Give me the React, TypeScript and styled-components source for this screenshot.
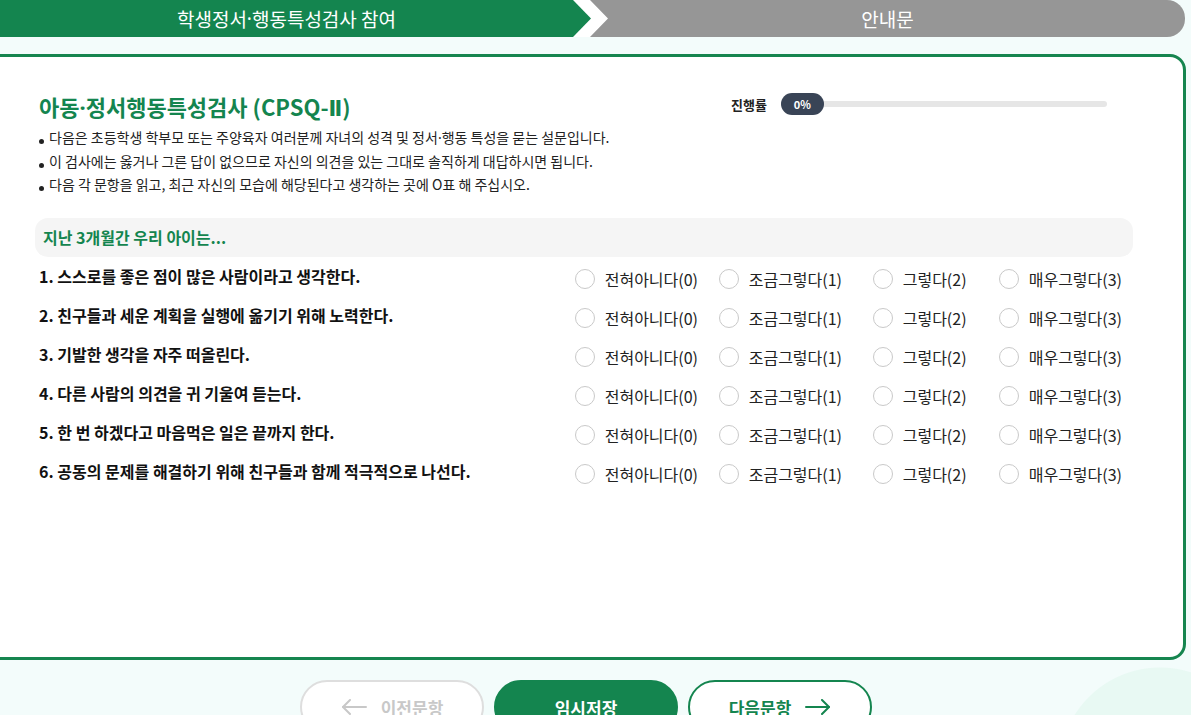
import React from "react";
import styled, { createGlobalStyle } from "styled-components";

const GREEN = "#14854f";

const GlobalStyle = createGlobalStyle`
    html, body {
        margin: 0;
        height: 100%;
        overflow: hidden;
    }
    body {
        background:
            radial-gradient(circle at 1160px 768px, #e8f9f3 100px, transparent 101px),
            #f3fcfb;
        font-family: "Noto Sans CJK KR", "Noto Sans", sans-serif;
        color: #222;
    }
`;

const Page = styled.div`
    width: 1210px;
    margin-left: -24px;
`;

// latin middle dot, the CJK one is full width
const Dot = styled.span`
    font-family: "Noto Sans", sans-serif;
`;

const Roman = styled.span`
    font-family: "DejaVu Sans", sans-serif;
    font-size: 0.95em;
    line-height: 1;
`;

const TabBar = styled.div`
    display: flex;
    height: 37px;
    background: linear-gradient(to right, transparent 590px, #fff 590px, #fff 636px, transparent 636px);
`;

const ActiveTab = styled.div`
    width: 615px;
    flex-shrink: 0;
    display: flex;
    align-items: center;
    justify-content: center;
    padding-left: 6px;
    box-sizing: border-box;
    background: ${GREEN};
    color: #fff;
    font-size: 19px;
    font-weight: 400;
    border-radius: 0 0 0 18px;
    clip-path: polygon(0 0, calc(100% - 18px) 0, 100% 50%, calc(100% - 18px) 100%, 0 100%);
`;

const NextTab = styled.div`
    flex: 1;
    margin-left: -1px;
    margin-right: 1px;
    display: flex;
    align-items: center;
    justify-content: center;
    background: #969696;
    color: #fff;
    font-size: 19px;
    font-weight: 400;
    border-radius: 0 18px 18px 0;
    clip-path: polygon(0 0, 100% 0, 100% 100%, 0 100%, 18px 50%);
`;

const Card = styled.section`
    margin-top: 17px;
    height: 606px;
    box-sizing: border-box;
    padding: 35px 50px 0 56px;
    background: #fff;
    border: 3px solid #16854f;
    border-radius: 16px;
`;

const HeadRow = styled.div`
    display: flex;
    align-items: center;
    justify-content: space-between;
    height: 28px;
    padding-left: 4px;
`;

const Title = styled.h1`
    margin: 0;
    font-size: 22px;
    line-height: 28px;
    font-weight: 700;
    color: ${GREEN};
`;

const Progress = styled.div`
    display: flex;
    align-items: center;
    width: 376px;
    margin-right: 26px;
    margin-top: -4px;
`;

const ProgressLabel = styled.span`
    font-size: 13px;
    font-weight: 700;
    color: #222;
    margin-right: 14px;
`;

const Track = styled.div`
    position: relative;
    flex: 1;
    height: 6px;
    border-radius: 3px;
    background: #e6e6e6;
`;

const Badge = styled.span`
    position: absolute;
    left: 0;
    top: 50%;
    transform: translateY(-50%);
    width: 43px;
    height: 22px;
    border-radius: 11px;
    background: #394456;
    color: #fff;
    font-size: 11px;
    font-weight: 700;
    display: flex;
    align-items: center;
    justify-content: center;
`;

const Notes = styled.ul`
    list-style: none;
    margin: 6px 0 0;
    padding: 0 0 0 4px;
`;

const Note = styled.li`
    font-size: 14px;
    line-height: 23.5px;
    color: #222;
    &::before {
        content: "";
        display: inline-block;
        width: 5px;
        height: 5px;
        margin-right: 5px;
        vertical-align: -1px;
        border-radius: 50%;
        background: #222;
    }
`;

const SectionHead = styled.div`
    margin-top: 21px;
    height: 39px;
    display: flex;
    align-items: center;
    padding: 0 8px;
    border-radius: 13px;
    background: #f5f5f5;
    color: ${GREEN};
    font-size: 16px;
    font-weight: 700;
`;

const Questions = styled.div`
    margin-top: 3px;
`;

const QuestionRow = styled.div`
    display: flex;
    align-items: center;
    height: 39px;
    padding: 0 11px 0 4px;
`;

const QuestionText = styled.div`
    flex: 1;
    font-size: 16px;
    font-weight: 700;
    color: #111;
    margin-bottom: 7px;
`;

const Options = styled.div`
    display: grid;
    grid-template-columns: 144px 154px 126px auto;
`;

const Option = styled.label`
    display: flex;
    align-items: center;
    gap: 10px;
    font-size: 16px;
    color: #222;
    cursor: pointer;
`;

const Radio = styled.input.attrs({ type: "radio" })`
    appearance: none;
    margin: 0;
    width: 20px;
    height: 20px;
    border: 1px solid #c9c9c9;
    border-radius: 50%;
    background: #fff;
    &:checked {
        border: 6px solid ${GREEN};
    }
`;

const Footer = styled.div`
    display: flex;
    justify-content: center;
    gap: 10px;
    margin-top: 20px;
    padding-left: 10px;
`;

type Variant = "disabled" | "primary" | "outline";

const NavButton = styled.button<{ $variant: Variant }>`
    width: 184px;
    height: 54px;
    box-sizing: border-box;
    border-radius: 27px;
    display: flex;
    align-items: center;
    justify-content: center;
    gap: 14px;
    font-family: inherit;
    font-size: 17px;
    font-weight: 700;
    border: 2px solid ${(p) => (p.$variant === "disabled" ? "#dedede" : GREEN)};
    background: ${(p) => (p.$variant === "primary" ? GREEN : "#fff")};
    color: ${(p) =>
        p.$variant === "disabled" ? "#c8c8c8" : p.$variant === "primary" ? "#fff" : GREEN};
`;

const Arrow = ({ dir }: { dir: "left" | "right" }) => (
    <svg width="26" height="16" viewBox="0 0 26 16" fill="none" stroke="currentColor" strokeWidth="2" strokeLinecap="round" strokeLinejoin="round">
        {dir === "left" ? (
            <>
                <line x1="2" y1="8" x2="25" y2="8" />
                <polyline points="9,1 2,8 9,15" />
            </>
        ) : (
            <>
                <line x1="1" y1="8" x2="24" y2="8" />
                <polyline points="17,1 24,8 17,15" />
            </>
        )}
    </svg>
);

const questions = [
    "스스로를 좋은 점이 많은 사람이라고 생각한다.",
    "친구들과 세운 계획을 실행에 옮기기 위해 노력한다.",
    "기발한 생각을 자주 떠올린다.",
    "다른 사람의 의견을 귀 기울여 듣는다.",
    "한 번 하겠다고 마음먹은 일은 끝까지 한다.",
    "공동의 문제를 해결하기 위해 친구들과 함께 적극적으로 나선다.",
];

const choices = ["전혀아니다(0)", "조금그렇다(1)", "그렇다(2)", "매우그렇다(3)"];

const App: React.FC = () => {
    return (
        <>
            <GlobalStyle />
            <Page>
                <TabBar>
                    <ActiveTab>
                        학생정서<Dot>·</Dot>행동특성검사 참여
                    </ActiveTab>
                    <NextTab>안내문</NextTab>
                </TabBar>
                <Card>
                    <HeadRow>
                        <Title>
                            아동<Dot>·</Dot>정서행동특성검사 (CPSQ-<Roman>Ⅱ</Roman>)
                        </Title>
                        <Progress>
                            <ProgressLabel>진행률</ProgressLabel>
                            <Track>
                                <Badge>0%</Badge>
                            </Track>
                        </Progress>
                    </HeadRow>
                    <Notes>
                        <Note>
                            다음은 초등학생 학부모 또는 주양육자 여러분께 자녀의 성격 및 정서<Dot>·</Dot>행동 특성을 묻는 설문입니다.
                        </Note>
                        <Note>이 검사에는 옳거나 그른 답이 없으므로 자신의 의견을 있는 그대로 솔직하게 대답하시면 됩니다.</Note>
                        <Note>다음 각 문항을 읽고, 최근 자신의 모습에 해당된다고 생각하는 곳에 O표 해 주십시오.</Note>
                    </Notes>
                    <SectionHead>지난 3개월간 우리 아이는...</SectionHead>
                    <Questions>
                        {questions.map((q, i) => (
                            <QuestionRow key={q}>
                                <QuestionText>
                                    {i + 1}. {q}
                                </QuestionText>
                                <Options>
                                    {choices.map((c) => (
                                        <Option key={c}>
                                            <Radio name={`q${i + 1}`} />
                                            {c}
                                        </Option>
                                    ))}
                                </Options>
                            </QuestionRow>
                        ))}
                    </Questions>
                </Card>
                <Footer>
                    <NavButton $variant="disabled">
                        <Arrow dir="left" />
                        이전문항
                    </NavButton>
                    <NavButton $variant="primary">임시저장</NavButton>
                    <NavButton $variant="outline">
                        다음문항
                        <Arrow dir="right" />
                    </NavButton>
                </Footer>
            </Page>
        </>
    );
};

export default App;
